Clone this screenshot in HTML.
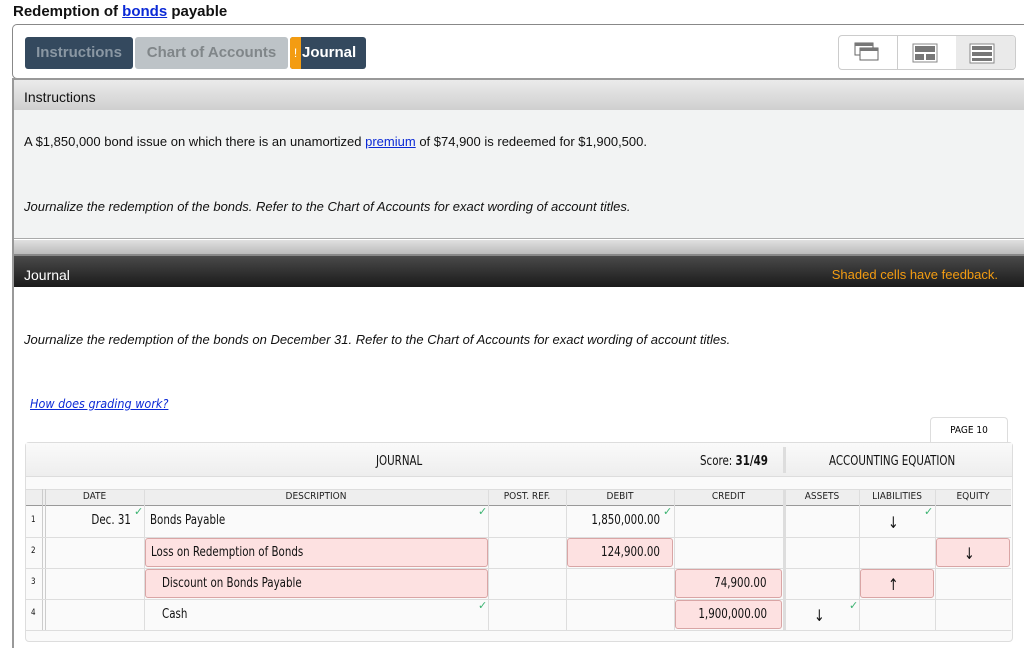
<!DOCTYPE html>
<html><head><style>
*{box-sizing:border-box;margin:0;padding:0}
body{width:1024px;height:636px;overflow:hidden;background:#fff;font-family:"Liberation Sans",sans-serif;position:relative}
.abs{position:absolute}
.title{left:13px;top:3px;font-size:15px;font-weight:bold;color:#111}
.title a{color:#0b29d6;text-decoration:underline}
.tabbar{left:12px;top:24px;width:1020px;height:55px;border:1px solid #888;border-radius:5px;border-right:none}
.tab{top:37px;height:32px;border-radius:3px;font-size:15px;font-weight:bold;line-height:32px;text-align:center}
.vb{top:35px;height:35px;border:1px solid #ccc;border-radius:4px;left:838px;width:178px;background:#fff}
.frame{left:12px;top:78px;width:1020px;height:570px;border-left:2px solid #999;border-top:2px solid #999}
.ih{left:14px;top:80px;width:1010px;height:30px;background:linear-gradient(#ebebeb,#cfcfcf);font-size:14px;line-height:34px;padding-left:10px;color:#111}
.ib{left:14px;top:110px;width:1010px;height:129px;background:#f2f3f3;border-bottom:1px solid #aaa}
.band{left:14px;top:240px;width:1010px;height:16px;background:linear-gradient(#e0e0e0,#bbb);border-bottom:2px solid #888}
.jh{left:14px;top:256px;width:1010px;height:31px;background:linear-gradient(#4a4a4a,#1a1a1a);color:#fff;font-size:14px;line-height:38px;padding-left:10px}
.it{font-size:13px;font-style:italic;color:#111}
.cell{position:absolute;font-family:"DejaVu Sans Condensed","DejaVu Sans",sans-serif;font-size:13px;color:#111;transform:scaleX(.88);transform-origin:left;white-space:nowrap}
.r{transform-origin:right;text-align:right}
.red{position:absolute;background:#fde1e1;border:1px solid #d9a5a5;border-radius:3px}
.ck{position:absolute;color:#3cb371;font-size:11px}
.ch{position:absolute;top:491px;font-size:10px;color:#222;font-family:"DejaVu Sans Condensed","DejaVu Sans",sans-serif;text-align:center}
</style></head><body>
<div class="abs title">Redemption of <a>bonds</a> payable</div>
<div class="abs tabbar"></div>
<div class="abs tab" style="left:25px;width:108px;background:#34495e;color:#8a97a3">Instructions</div>
<div class="abs tab" style="left:135px;width:153px;background:#bdc3c7;color:#808689">Chart of Accounts</div>
<div class="abs tab" style="left:290px;width:76px;background:#34495e;color:#fff;text-align:left;padding-left:12px">Journal</div>
<div class="abs" style="left:290px;top:37px;width:11px;height:32px;background:#f39c12;border-radius:3px 0 0 3px;color:#fff;font-size:12px;line-height:32px;text-align:center">!</div>
<div class="abs vb"></div>
<div class="abs" style="left:897px;top:36px;width:1px;height:33px;background:#ccc"></div>
<div class="abs" style="left:956px;top:36px;width:59px;height:33px;background:#eaeaea;border-radius:0 4px 4px 0"></div>
<svg class="abs" style="left:850px;top:40px" width="160" height="26">
<rect x="5" y="3" width="18" height="12" fill="#fff" stroke="#666"/><rect x="5" y="3" width="18" height="3" fill="#777"/>
<rect x="10" y="8" width="18" height="12" fill="#fff" stroke="#666"/><rect x="10" y="8" width="18" height="3" fill="#777"/>
<rect x="63" y="4" width="24" height="18" fill="#fff" stroke="#888"/><rect x="65" y="6" width="20" height="6" fill="#777"/><rect x="65" y="14" width="9" height="6" fill="#777"/><rect x="76" y="14" width="9" height="6" fill="#777"/>
<rect x="120" y="4" width="24" height="19" fill="#fff" stroke="#888"/><rect x="122" y="6" width="20" height="4" fill="#777"/><rect x="122" y="12" width="20" height="4" fill="#777"/><rect x="122" y="18" width="20" height="3" fill="#777"/>
</svg>
<div class="abs frame"></div>
<div class="abs ih">Instructions</div>
<div class="abs ib"></div>
<div class="abs" style="left:24px;top:134px;font-size:13px;color:#111">A $1,850,000 bond issue on which there is an unamortized <span style="color:#0b29d6;text-decoration:underline">premium</span> of $74,900 is redeemed for $1,900,500.</div>
<div class="abs it" style="left:24px;top:199px">Journalize the redemption of the bonds. Refer to the Chart of Accounts for exact wording of account titles.</div>
<div class="abs band"></div>
<div class="abs jh">Journal<span style="position:absolute;right:26px;color:#f39c12;font-size:13px">Shaded cells have feedback.</span></div>
<div class="abs it" style="left:24px;top:332px">Journalize the redemption of the bonds on December 31. Refer to the Chart of Accounts for exact wording of account titles.</div>
<div class="abs it" style="left:30px;top:396px;color:#0b29d6;text-decoration:underline;font-family:'DejaVu Sans Condensed',sans-serif;font-size:12.5px">How does grading work?</div>
<div class="abs" style="left:930px;top:417px;width:78px;height:26px;border:1px solid #ddd;border-bottom:none;border-radius:4px 4px 0 0;font-size:10px;line-height:26px;text-align:center;font-family:'DejaVu Sans Condensed',sans-serif">PAGE 10</div>
<div class="abs" style="left:25px;top:442px;width:988px;height:200px;border:1px solid #ddd;border-radius:4px;background:#fafafa"></div>
<div class="abs" style="left:26px;top:443px;width:986px;height:34px;background:linear-gradient(#fafafa,#eee);border-bottom:1px solid #ddd"></div>
<div class="cell" style="left:376px;top:454px;font-size:13px">JOURNAL</div>
<div class="cell" style="left:700px;top:454px;font-size:13px">Score: <b>31/49</b></div>
<div class="abs" style="left:783px;top:447px;width:3px;height:26px;background:#ddd"></div>
<div class="cell" style="left:829px;top:454px;font-size:13px">ACCOUNTING EQUATION</div>
<div class="abs" style="left:26px;top:489px;width:985px;height:17px;background:#eee;border-top:1px solid #ddd;border-bottom:1px solid #999"></div>
<div class="ch" style="left:45px;width:99px">DATE</div>
<div class="ch" style="left:144px;width:344px">DESCRIPTION</div>
<div class="ch" style="left:488px;width:78px">POST. REF.</div>
<div class="ch" style="left:566px;width:108px">DEBIT</div>
<div class="ch" style="left:674px;width:109px">CREDIT</div>
<div class="ch" style="left:785px;width:74px">ASSETS</div>
<div class="ch" style="left:859px;width:76px">LIABILITIES</div>
<div class="ch" style="left:935px;width:76px">EQUITY</div>
<div class="abs" style="left:42px;top:489px;width:4px;height:142px;border-left:1px solid #ccc;border-right:1px solid #ccc"></div>
<div class="abs" style="left:144px;top:489px;width:1px;height:142px;background:#ddd"></div>
<div class="abs" style="left:488px;top:489px;width:1px;height:142px;background:#ddd"></div>
<div class="abs" style="left:566px;top:489px;width:1px;height:142px;background:#ddd"></div>
<div class="abs" style="left:674px;top:489px;width:1px;height:142px;background:#ddd"></div>
<div class="abs" style="left:783px;top:489px;width:3px;height:142px;background:#ddd"></div>
<div class="abs" style="left:859px;top:489px;width:1px;height:142px;background:#ddd"></div>
<div class="abs" style="left:935px;top:489px;width:1px;height:142px;background:#ddd"></div>
<div class="abs" style="left:26px;top:537px;width:985px;height:1px;background:#ddd"></div>
<div class="abs" style="left:26px;top:568px;width:985px;height:1px;background:#ddd"></div>
<div class="abs" style="left:26px;top:599px;width:985px;height:1px;background:#ddd"></div>
<div class="abs" style="left:26px;top:630px;width:985px;height:1px;background:#ddd"></div>
<div class="red" style="left:145px;top:538px;width:343px;height:29px"></div>
<div class="red" style="left:567px;top:538px;width:106px;height:29px"></div>
<div class="red" style="left:936px;top:538px;width:74px;height:29px"></div>
<div class="red" style="left:145px;top:569px;width:343px;height:29px"></div>
<div class="red" style="left:675px;top:569px;width:107px;height:29px"></div>
<div class="red" style="left:860px;top:569px;width:74px;height:29px"></div>
<div class="red" style="left:675px;top:600px;width:107px;height:29px"></div>
<div class="cell" style="left:31px;top:515px;font-size:9px">1</div>
<div class="cell" style="left:31px;top:546px;font-size:9px">2</div>
<div class="cell" style="left:31px;top:577px;font-size:9px">3</div>
<div class="cell" style="left:31px;top:608px;font-size:9px">4</div>
<div class="cell r" style="right:893px;top:513px">Dec. 31</div>
<div class="cell" style="left:150px;top:513px">Bonds Payable</div>
<div class="cell" style="left:151px;top:545px">Loss on Redemption of Bonds</div>
<div class="cell" style="left:162px;top:576px">Discount on Bonds Payable</div>
<div class="cell" style="left:162px;top:607px">Cash</div>
<div class="cell r" style="right:364px;top:513px">1,850,000.00</div>
<div class="cell r" style="right:364px;top:545px">124,900.00</div>
<div class="cell r" style="right:257px;top:576px">74,900.00</div>
<div class="cell r" style="right:257px;top:607px">1,900,000.00</div>
<div class="cell" style="left:888px;top:513px;font-size:16px">↓</div>
<div class="cell" style="left:964px;top:544px;font-size:16px">↓</div>
<div class="cell" style="left:888px;top:575px;font-size:16px">↑</div>
<div class="cell" style="left:814px;top:606px;font-size:16px">↓</div>
<div class="ck" style="left:134px;top:505px">✓</div>
<div class="ck" style="left:478px;top:505px">✓</div>
<div class="ck" style="left:663px;top:505px">✓</div>
<div class="ck" style="left:924px;top:505px">✓</div>
<div class="ck" style="left:478px;top:599px">✓</div>
<div class="ck" style="left:849px;top:599px">✓</div>
</body></html>
